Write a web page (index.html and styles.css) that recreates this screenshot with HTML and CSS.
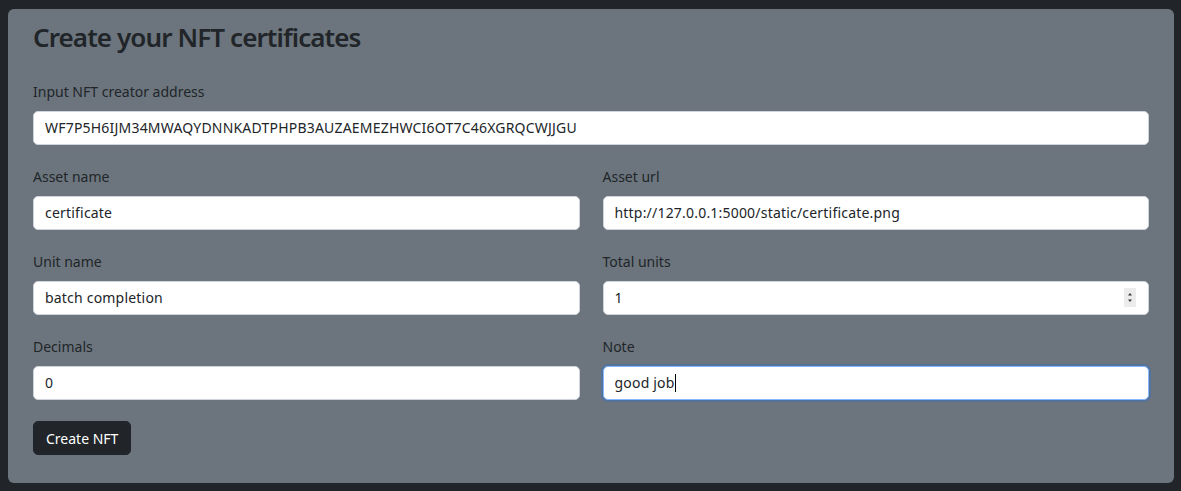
FILE: index.html
```html
<!DOCTYPE html>
<html lang="en">
<head>
<meta charset="utf-8">
<title>Create your NFT certificates</title>
<link rel="stylesheet" href="styles.css">
</head>
<body>
<div class="card">
  <h1 class="title">Create your NFT certificates</h1>
  <form class="form">
    <div class="field">
      <label class="label" for="addr">Input NFT creator address</label>
      <input class="control" id="addr" type="text" value="WF7P5H6IJM34MWAQYDNNKADTPHPB3AUZAEMEZHWCI6OT7C46XGRQCWJJGU">
    </div>
    <div class="grid">
      <div class="field">
        <label class="label" for="aname">Asset name</label>
        <input class="control" id="aname" type="text" value="certificate">
      </div>
      <div class="field">
        <label class="label" for="aurl">Asset url</label>
        <input class="control" id="aurl" type="text" value="http://127.0.0.1:5000/static/certificate.png">
      </div>
      <div class="field">
        <label class="label" for="uname">Unit name</label>
        <input class="control" id="uname" type="text" value="batch completion">
      </div>
      <div class="field">
        <label class="label" for="total">Total units</label>
        <div class="overlay-wrap">
          <input class="control number" id="total" type="number" value="1">
          <span class="spinner" aria-hidden="true">
            <svg width="12" height="19" viewBox="0 0 12 19">
              <path d="M4 7.5 L6 5 L8 7.5 Z" fill="#3a3a3a"/>
              <path d="M4 11.5 L6 14 L8 11.5 Z" fill="#3a3a3a"/>
            </svg>
          </span>
        </div>
      </div>
      <div class="field">
        <label class="label" for="dec">Decimals</label>
        <input class="control" id="dec" type="text" value="0">
      </div>
      <div class="field">
        <label class="label" for="note">Note</label>
        <div class="overlay-wrap">
          <input class="control focused" id="note" type="text" value="good job">
          <span class="caret"></span>
        </div>
      </div>
    </div>
    <div class="actions">
      <button class="btn" type="button">Create NFT</button>
    </div>
  </form>
</div>
</body>
</html>
```

FILE: styles.css
```css
html, body {
  margin: 0;
  padding: 0;
  background: #212529;
}
body {
  font-family: "Noto Sans", "Open Sans", sans-serif;
  color: #212529;
  font-size: 14px;
  line-height: 1.5;
}
.card {
  margin: 9px 7px 8px 8px;
  background: #6c757d;
  border-radius: 6px;
  padding: 11px 25px 28px 25px;
  height: 474px;
  box-sizing: border-box;
}
.title {
  margin: 0 0 27px 0;
  font-size: 26px;
  line-height: 34px;
  font-weight: 600;
  letter-spacing: -0.9px;
  color: #212529;
}
.form {
  display: flex;
  flex-direction: column;
  gap: 21px;
}
.field {
  display: flex;
  flex-direction: column;
}
.label {
  display: block;
  line-height: 21px;
  margin-bottom: 9px;
  color: #212529;
}
.grid {
  display: grid;
  grid-template-columns: 1fr 1fr;
  column-gap: 23px;
  row-gap: 21px;
}
.control {
  box-sizing: border-box;
  height: 34px;
  width: 100%;
  margin: 0;
  padding: 0 11px 2px 11px;
  font-family: inherit;
  font-size: 14px;
  letter-spacing: 0.2px;
  color: #212529;
  background: #fff;
  border: 1px solid #ced4da;
  border-radius: 5px;
  outline: none;
}
.number {
  -moz-appearance: textfield;
}
.number::-webkit-inner-spin-button,
.number::-webkit-outer-spin-button {
  -webkit-appearance: none;
  margin: 0;
}
.focused {
  border-color: #86b7fe;
  box-shadow: 0 0 0 2px rgba(13, 110, 253, 0.25);
}
.overlay-wrap {
  position: relative;
}
.spinner {
  position: absolute;
  right: 13px;
  top: 7px;
  width: 12px;
  height: 19px;
  background: #ececec;
  display: block;
}
.spinner svg {
  display: block;
}
.caret {
  position: absolute;
  left: 72px;
  top: 8px;
  width: 1px;
  height: 18px;
  background: #000;
}
.actions {
  display: flex;
}
.btn {
  height: 34px;
  padding: 0 12px;
  font-family: inherit;
  font-size: 14px;
  color: #fff;
  background: #212529;
  border: 1px solid #212529;
  border-radius: 5px;
}
```
